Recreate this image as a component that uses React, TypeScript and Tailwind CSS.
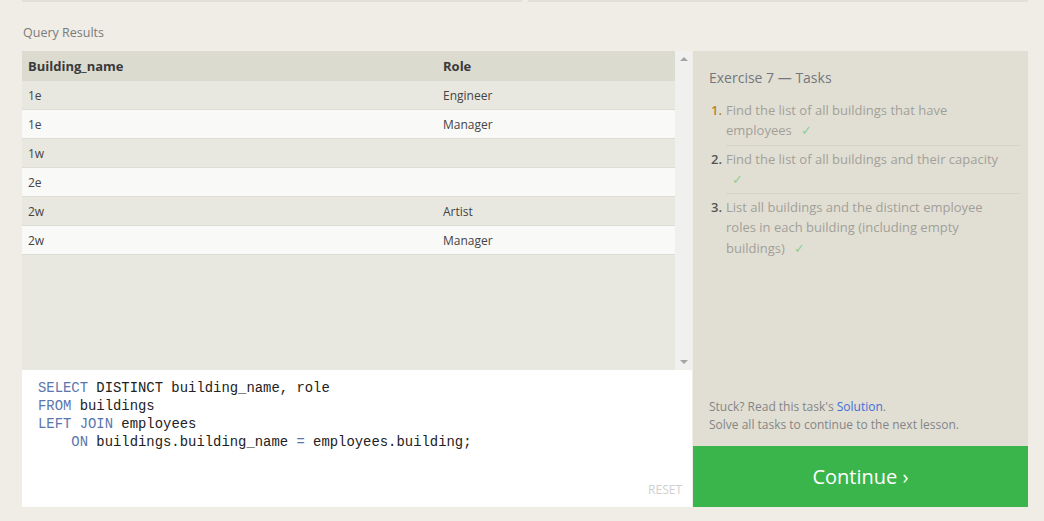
import React from 'react';

const rows: [string, string][] = [
  ['1e', 'Engineer'],
  ['1e', 'Manager'],
  ['1w', ''],
  ['2e', ''],
  ['2w', 'Artist'],
  ['2w', 'Manager'],
];

const tasks = [
  { text: 'Find the list of all buildings that have employees', num: 'text-[#b5862e]' },
  { text: 'Find the list of all buildings and their capacity', num: 'text-[#555]' },
  {
    text: 'List all buildings and the distinct employee roles in each building (including empty buildings)',
    num: 'text-[#555]',
  },
];

function Kw({ children }: { children: React.ReactNode }) {
  return <span className="text-[#5a76ad]">{children}</span>;
}

export default function App() {
  return (
    <div className="w-[1044px] h-[521px] bg-[#efede6] overflow-hidden font-['Open_Sans',sans-serif]">
      <div className="flex gap-[6px] pl-[22px]">
        <div className="w-[500px] h-[2px] bg-[#e2e0d8]" />
        <div className="w-[500px] h-[2px] bg-[#e2e0d8]" />
      </div>

      <div className="pl-[23px] pt-[22px] h-[49px] text-[12.5px] text-[#7b7b7b]">Query Results</div>

      <div className="flex pl-[22px]">
        {/* left: results + editor */}
        <div className="w-[670px] flex flex-col">
          <div className="flex h-[319px] bg-[#e9e8e0]">
            <div className="w-[653px] text-[12px] text-[#444]">
              <div className="flex h-[30px] items-center pt-px bg-[#dcdbd0] font-bold text-[13px] text-[#3a3a3a]">
                <div className="w-[421px] pl-[6px]">Building_name</div>
                <div>Role</div>
              </div>
              {rows.map(([b, r], i) => (
                <div
                  key={i}
                  className={`flex h-[29px] items-center pt-px border-b border-[#dddcd5] ${
                    i % 2 === 0 ? 'bg-[#e9e8e0]' : 'bg-[#f9f9f8]'
                  }`}
                >
                  <div className="w-[421px] pl-[6px]">{b}</div>
                  <div>{r}</div>
                </div>
              ))}
            </div>
            <div className="w-[17px] bg-[#f0f0ee] flex flex-col justify-between items-center py-[6px]">
              <div className="w-0 h-0 border-l-[4px] border-r-[4px] border-b-[4px] border-l-transparent border-r-transparent border-b-[#a3a3a3]" />
              <div className="w-0 h-0 border-l-[4px] border-r-[4px] border-t-[4px] border-l-transparent border-r-transparent border-t-[#a3a3a3]" />
            </div>
          </div>

          <div className="h-[137px] bg-white flex flex-col justify-between pl-[16px] pr-[10px] pt-[9px] pb-[8px]">
            <pre className="font-['Liberation_Mono',monospace] text-[13.9px] leading-[18px] text-[#222]">
              <Kw>SELECT</Kw> DISTINCT building_name, role{'\n'}
              <Kw>FROM</Kw> buildings{'\n'}
              <Kw>LEFT JOIN</Kw> employees{'\n'}
              {'    '}
              <Kw>ON</Kw> buildings.building_name <Kw>=</Kw> employees.building;
            </pre>
            <div className="self-end text-[12px] text-[#cfcfcf]">RESET</div>
          </div>
        </div>

        {/* right: tasks */}
        <div className="w-[335px] ml-px flex flex-col">
          <div className="h-[395px] bg-[#e1dfd4] pl-[16px] pr-[8px] pt-[16px] pb-[12px] flex flex-col justify-between">
            <div>
              <div className="text-[14px] text-[#74777e]">Exercise 7 — Tasks</div>
              <ol className="mt-[12px] text-[13px] leading-[20.3px] text-[#a19f99]">
                {tasks.map((t, i) => (
                  <li key={i} className="flex">
                    <span className={`w-[17px] pl-[2px] shrink-0 font-semibold ${t.num}`}>{i + 1}.</span>
                    <div
                      className={`flex-1 pr-[8px] pb-[4px] mb-[3px] ${
                        i < tasks.length - 1 ? 'border-b border-[#d6d4c9]' : ''
                      }`}
                    >
                      {t.text}{' '}
                      <span className="text-[#8ccf92] ml-[6px]">✓</span>
                    </div>
                  </li>
                ))}
              </ol>
            </div>
            <div className="text-[12px] leading-[18px] text-[#858585]">
              <div>
                Stuck? Read this task's <span className="text-[#3d6fd6]">Solution</span>.
              </div>
              <div>Solve all tasks to continue to the next lesson.</div>
            </div>
          </div>
          <div className="h-[61px] bg-[#3ab54b] flex items-center justify-center text-white text-[20px]">
            Continue ›
          </div>
        </div>
      </div>
    </div>
  );
}
